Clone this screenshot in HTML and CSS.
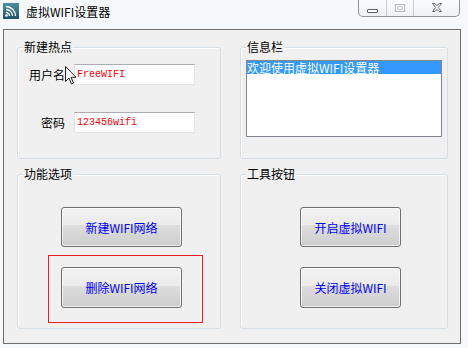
FILE: index.html
```html
<!DOCTYPE html>
<html lang="zh-CN">
<head>
    <meta charset="UTF-8">
    <title>虚拟WIFI设置器</title>
    <link rel="stylesheet" href="styles.css">
</head>
<body>
    <div class="window">
        <div class="titlebar">
            <svg class="app-icon" width="16" height="16" viewBox="0 0 16 16">
                <defs>
                    <linearGradient id="ig" x1="0" y1="0" x2="0" y2="1">
                        <stop offset="0" stop-color="#4f8fa3"/>
                        <stop offset="1" stop-color="#1f5566"/>
                    </linearGradient>
                </defs>
                <rect x="0" y="0" width="16" height="16" fill="url(#ig)"/>
                <g fill="none" stroke="#fff" stroke-width="1.3">
                    <path d="M3 9.5 A3.5 3.5 0 0 1 6.5 13"/>
                    <path d="M3 6.5 A6.5 6.5 0 0 1 9.5 13"/>
                    <path d="M3 3.5 A9.5 9.5 0 0 1 12.5 13"/>
                </g>
                <circle cx="3.5" cy="12.5" r="1.3" fill="#fff"/>
            </svg>
            <span class="title">虚拟WIFI设置器</span>
            <div class="caption-buttons">
                <div class="cap-btn cap-min"><span class="min-glyph"></span></div>
                <div class="cap-btn cap-max"><span class="max-glyph"></span></div>
                <div class="cap-btn cap-close">
                    <svg width="10" height="9" viewBox="0 0 10 9">
                        <path d="M0.5 0.5 H3 L5 2.7 L7 0.5 H9.5 L6.3 4.5 L9.5 8.5 H7 L5 6.3 L3 8.5 H0.5 L3.7 4.5 Z" fill="#fff" stroke="#6b6b6b" stroke-width="1"/>
                    </svg>
                </div>
            </div>
        </div>

        <div class="client">
            <div class="group">
                <div class="group-title">新建热点</div>
                <div class="field-row first">
                    <label class="field-label label-user">用户名</label>
                    <div class="textbox">FreeWIFI</div>
                </div>
                <div class="field-row second">
                    <label class="field-label label-pass">密码</label>
                    <div class="textbox">123456wifi</div>
                </div>
            </div>

            <div class="group">
                <div class="group-title">信息栏</div>
                <div class="listbox">
                    <div class="list-item selected">欢迎使用虚拟WIFI设置器</div>
                </div>
            </div>

            <div class="group group-actions">
                <div class="group-title">功能选项</div>
                <button class="win-button wide first-btn">新建WIFI网络</button>
                <div class="highlight-frame">
                    <button class="win-button wide tall">删除WIFI网络</button>
                </div>
            </div>

            <div class="group group-tools">
                <div class="group-title">工具按钮</div>
                <button class="win-button narrow first-btn">开启虚拟WIFI</button>
                <button class="win-button narrow tall second-btn">关闭虚拟WIFI</button>
            </div>
        </div>

        <!-- mouse pointer captured in the screenshot -->
        <svg class="pointer" width="12" height="19" viewBox="0 0 12 19">
            <path d="M0.5 0.5 V15.5 L4 12 L6.5 18 L8.5 17 L6 11.3 H11 Z" fill="#fff" stroke="#222" stroke-width="1"/>
        </svg>
    </div>
</body>
</html>
```

FILE: styles.css
```css
* {
    margin: 0;
    padding: 0;
    box-sizing: border-box;
}

body {
    width: 468px;
    height: 348px;
    background: #f5f9fb;
    font-family: "Noto Sans CJK SC", "Liberation Sans", sans-serif;
    font-size: 12px;
    color: #000;
    overflow: hidden;
}

.window {
    position: relative;
    width: 468px;
    height: 348px;
}

/* Title bar */
.titlebar {
    height: 29px;
    display: flex;
    align-items: flex-start;
    padding-left: 3px;
}

.app-icon {
    margin-top: 3px;
}

.title {
    margin-left: 7px;
    margin-top: 4px;
    line-height: 16px;
    font-size: 12px;
}

.caption-buttons {
    margin-left: auto;
    margin-right: 8px;
    margin-top: -1px;
    height: 18px;
    display: flex;
    border: 1px solid #8c959c;
    border-top: none;
    border-radius: 0 0 5px 5px;
    background: linear-gradient(#fbfcfd, #eef2f5);
    overflow: hidden;
}

.cap-btn {
    height: 17px;
    display: flex;
    align-items: center;
    justify-content: center;
}

.cap-min {
    width: 28px;
    border-right: 1px solid #c3cad0;
}

.cap-max {
    width: 27px;
    border-right: 1px solid #c3cad0;
}

.cap-close {
    width: 45px;
}

.min-glyph {
    width: 11px;
    height: 4px;
    margin-top: 6px;
    border: 1px solid #5e5e5e;
    border-radius: 1px;
    background: #fff;
}

.max-glyph {
    width: 10px;
    height: 8px;
    border: 1px solid #b4babf;
    box-shadow: inset 0 0 0 1px #fff, inset 0 0 0 2px #c9cfd3;
}

/* Client area */
.client {
    margin-left: 3px;
    width: 458px;
    height: 315px;
    background: #f0f0f0;
    border: 1px solid #6f6f6f;
    display: grid;
    grid-template-columns: 204px 208px;
    grid-template-rows: 112px 155px;
    column-gap: 19px;
    row-gap: 15px;
    padding: 17px 0 0 13px;
}

.group {
    border: 1px solid #d5dfe5;
    border-radius: 3px;
    box-shadow: inset 1px 1px 0 #fff;
    display: flex;
    flex-direction: column;
    align-items: flex-start;
}

.group-title {
    margin: -8px 0 0 5px;
    padding: 0 1px;
    background: #f0f0f0;
    line-height: 14px;
    height: 14px;
}

/* Hotspot fields */
.field-row {
    display: flex;
    align-items: center;
    height: 21px;
}

.field-row.first {
    margin-top: 10px;
}

.field-row.second {
    margin-top: 27px;
}

.field-label {
    width: 56px;
    line-height: 14px;
}

.label-user {
    padding-left: 11px;
}

.label-pass {
    padding-left: 23px;
}

.textbox {
    width: 121px;
    height: 21px;
    background: #fff;
    border: 1px solid #e2e7ec;
    border-top-color: #abadb3;
    padding: 3px 0 0 2px;
    font-family: "Liberation Mono", monospace;
    font-size: 10px;
    line-height: 14px;
    color: #ff0000;
}

/* Info listbox */
.listbox {
    margin: 6px 0 0 5px;
    width: 196px;
    height: 77px;
    background: #fff;
    border: 1px solid #828790;
}

.list-item {
    height: 13px;
    line-height: 13px;
    white-space: nowrap;
}

.list-item.selected {
    background: #3399ff;
    color: #fff;
}

/* Buttons */
.win-button {
    height: 40px;
    border: 1px solid #707070;
    border-radius: 3px;
    background: linear-gradient(#f2f2f2 0%, #ebebeb 45%, #dddddd 46%, #cdcdcd 100%);
    box-shadow: inset 0 0 0 1px rgba(255, 255, 255, 0.7);
    color: #0000ff;
    font-family: "Noto Sans CJK SC", "Liberation Sans", sans-serif;
    font-size: 12px;
    cursor: pointer;
}

.win-button.tall {
    height: 41px;
}

.win-button.wide {
    width: 121px;
}

.win-button.narrow {
    width: 101px;
}

.group-actions .first-btn {
    margin: 26px 0 0 43px;
}

.highlight-frame {
    margin: 8px 0 0 30px;
    width: 155px;
    height: 68px;
    border: 1px solid #ee1c24;
    padding: 11px 0 0 12px;
}

.group-tools .first-btn {
    margin: 26px 0 0 59px;
}

.group-tools .second-btn {
    margin: 20px 0 0 59px;
}

.pointer {
    position: absolute;
    left: 65px;
    top: 66px;
}
```
